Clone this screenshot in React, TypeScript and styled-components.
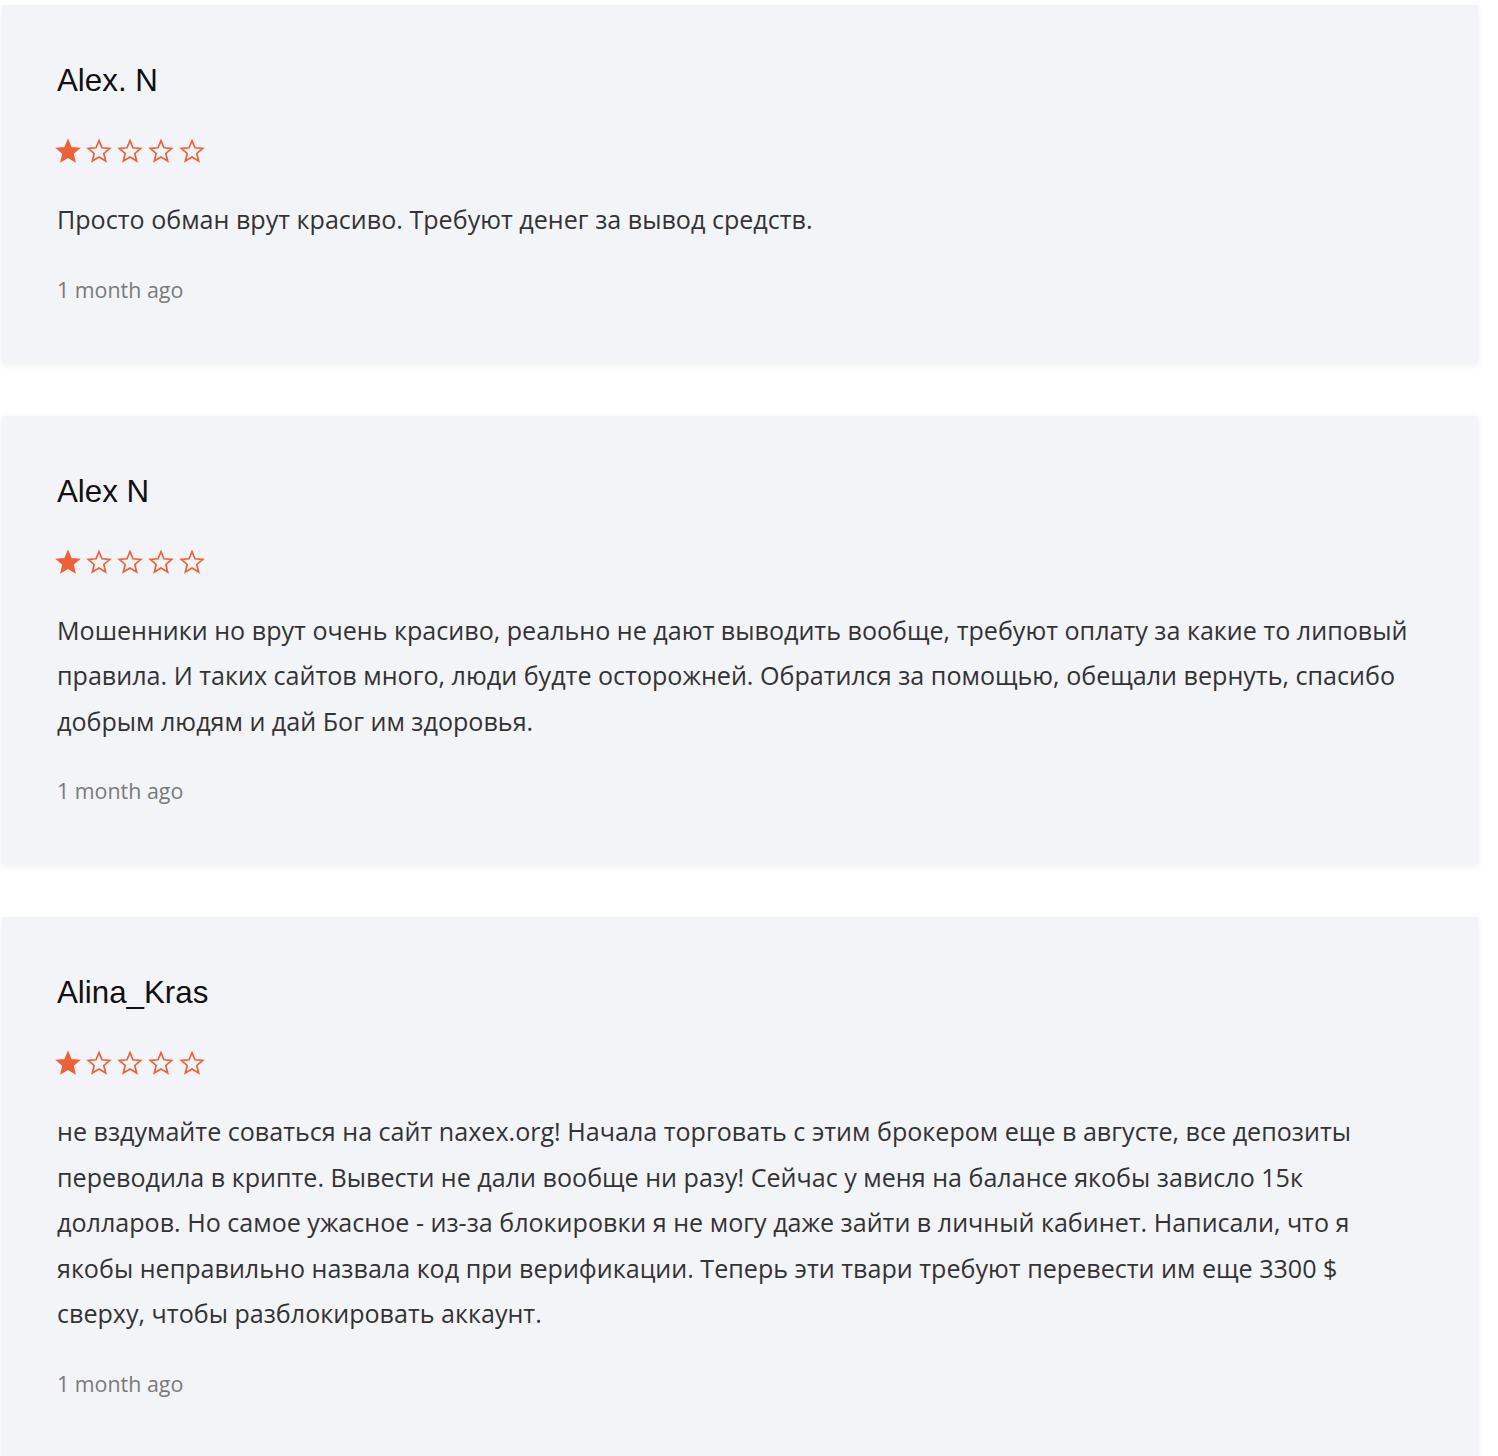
import React from "react";
import styled, { createGlobalStyle } from "styled-components";

const Global = createGlobalStyle`
  html, body { margin: 0; padding: 0; background: #ffffff; }
  body { font-family: "Open Sans", "Liberation Sans", sans-serif; }
`;

const Page = styled.div`
  display: flex;
  flex-direction: column;
  gap: 53px;
  padding: 5px 20px 40px 2px;
`;

const Card = styled.article`
  background: #f3f4f8;
  box-shadow: 0 2px 8px rgba(0, 0, 0, 0.07);
  padding: 56px 54px 58px 55px;
  display: flex;
  flex-direction: column;
`;

const Name = styled.h3`
  margin: 0;
  font-family: "Liberation Sans", Arial, sans-serif;
  font-weight: 400;
  font-size: 31.3px;
  line-height: 40px;
  color: #111111;
`;

const Stars = styled.div`
  display: flex;
  gap: 7px;
  margin-top: 38px;
  margin-left: -1px;
  height: 24px;
`;

const Text = styled.p`
  margin: 34px 0 0;
  font-family: "Open Sans", sans-serif;
  font-size: 25.1px;
  line-height: 45.5px;
  color: #333333;
`;

const Date = styled.div`
  margin-top: 32px;
  font-family: "Open Sans", sans-serif;
  font-size: 21.4px;
  line-height: 30px;
  color: #7a7a7a;
`;

const STAR =
  "M12 1.6L14.99 8.78 22.75 9.41 16.84 14.47 18.64 22.04 12 17.99 5.36 22.04 7.16 14.47 1.25 9.41 9.01 8.78Z";

const Star = ({ filled }: { filled: boolean }) => (
  <svg width="24" height="24" viewBox="0 0 24 24" style={{ overflow: "visible" }}>
    <path
      d={STAR}
      fill={filled ? "#ef6035" : "none"}
      stroke="#ef6035"
      strokeWidth={1.7}
      strokeLinejoin="miter"
    />
  </svg>
);

const Rating = ({ value }: { value: number }) => (
  <Stars>
    {[0, 1, 2, 3, 4].map((i) => (
      <Star key={i} filled={i < value} />
    ))}
  </Stars>
);

const reviews = [
  {
    name: "Alex. N",
    text: "Просто обман врут красиво. Требуют денег за вывод средств.",
  },
  {
    name: "Alex N",
    text: "Мошенники но врут очень красиво, реально не дают выводить вообще, требуют оплату за какие то липовый правила. И таких сайтов много, люди будте осторожней. Обратился за помощью, обещали вернуть, спасибо добрым людям и дай Бог им здоровья.",
  },
  {
    name: "Alina_Kras",
    text: "не вздумайте соваться на сайт naxex.org! Начала торговать с этим брокером еще в августе, все депозиты переводила в крипте. Вывести не дали вообще ни разу! Сейчас у меня на балансе якобы зависло 15к долларов. Но самое ужасное - из-за блокировки я не могу даже зайти в личный кабинет. Написали, что я якобы неправильно назвала код при верификации. Теперь эти твари требуют перевести им еще 3300 $ сверху, чтобы разблокировать аккаунт.",
  },
];

export default function App() {
  return (
    <>
      <Global />
      <Page>
        {reviews.map((r) => (
          <Card key={r.name}>
            <Name>{r.name}</Name>
            <Rating value={1} />
            <Text>{r.text}</Text>
            <Date>1 month ago</Date>
          </Card>
        ))}
      </Page>
    </>
  );
}
